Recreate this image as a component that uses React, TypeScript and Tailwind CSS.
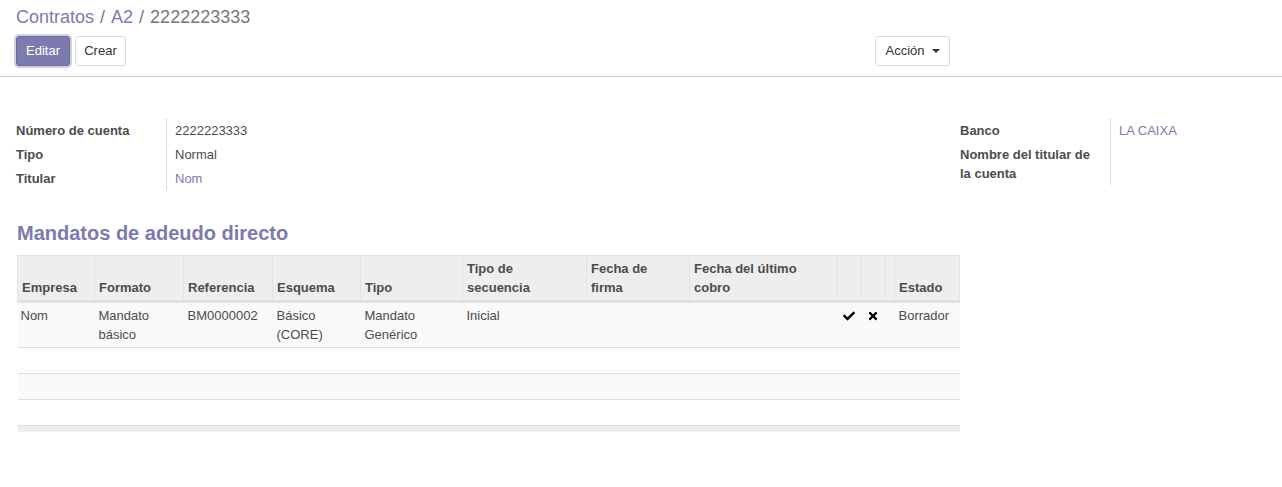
import { FaCheck, FaTimes } from "react-icons/fa";

const cols = [
	{ label: "Empresa", w: "w-[77px]" },
	{ label: "Formato", w: "w-[89px]" },
	{ label: "Referencia", w: "w-[89px]" },
	{ label: "Esquema", w: "w-[88px]" },
	{ label: "Tipo", w: "w-[102px]" },
	{ label: "Tipo de\nsecuencia", w: "w-[124px]" },
	{ label: "Fecha de\nfirma", w: "w-[103px]" },
	{ label: "Fecha del último\ncobro", w: "w-[148px]" },
	{ label: "", w: "w-[24px]" },
	{ label: "", w: "w-[24px]" },
	{ label: "", w: "w-[9px]" },
	{ label: "Estado", w: "w-[65px]" },
];

function Field({ label, value, link }: { label: string; value?: string; link?: boolean }) {
	return (
		<div className="flex">
			<div className="w-[150px] shrink-0 pr-2 py-[2.5px] font-bold leading-[19px]">{label}</div>
			<div
				className={`flex-1 border-l border-[#d9d9d9] pl-[8px] py-[2.5px] leading-[19px] ${
					link ? "text-[#7c7bad]" : ""
				}`}
			>
				{value}
			</div>
		</div>
	);
}

export default function App() {
	return (
		<div className="min-h-[487px] bg-white text-[13px] text-[#4c4c4c] font-['Liberation_Sans',Arial,sans-serif]">
			{/* control panel */}
			<div className="border-b border-[#cfcfcf] px-[16px] pt-[5px] pb-[10px]">
				<div className="text-[18px] leading-[24px]">
					<span className="text-[#7c7bad]">Contratos</span>
					<span className="text-[#777] mx-[6px]">/</span>
					<span className="text-[#7c7bad]">A2</span>
					<span className="text-[#777] mx-[6px]">/</span>
					<span className="text-[#777]">2222223333</span>
				</div>
				<div className="mt-[7px] flex items-center">
					<button className="h-[30px] w-[54px] rounded-[3px] border border-[#6d6c9c] bg-[#7c7bad] text-white shadow-[0_0_0_2px_rgba(124,123,173,0.35)]">
						Editar
					</button>
					<button className="ml-[5px] h-[30px] w-[51px] rounded-[3px] border border-[#dcdcdc] bg-white text-[#333]">
						Crear
					</button>
					<div className="ml-[749px]">
						<button className="flex h-[30px] w-[75px] items-center justify-center gap-[7px] rounded-[3px] border border-[#dcdcdc] bg-white text-[#333]">
							Acción
							<span className="h-0 w-0 border-x-[4px] border-t-[4px] border-x-transparent border-t-[#333]" />
						</button>
					</div>
				</div>
			</div>

			{/* form */}
			<div className="px-[16px] pt-[41px]">
				<div className="flex">
					<div className="w-[310px]">
						<Field label="Número de cuenta" value="2222223333" />
						<Field label="Tipo" value="Normal" />
						<Field label="Titular" value="Nom" link />
					</div>
					<div className="ml-[634px] w-[306px]">
						<Field label="Banco" value="LA CAIXA" link />
						<Field label="Nombre del titular de la cuenta" value="" />
					</div>
				</div>

				<h2 className="ml-[1px] mt-[30px] text-[20px] font-bold leading-[26px] text-[#7c7bad]">
					Mandatos de adeudo directo
				</h2>

				<table className="ml-[1px] mt-[9px] w-[942px] table-fixed border-collapse">
					<thead>
						<tr className="bg-[#eeeeee] border-t border-[#e2e2e2]">
							{cols.map((c, i) => (
								<th
									key={i}
									className={`${c.w} whitespace-pre-line border-x border-[#e2e2e2] border-b-[3px] border-b-[#dee2e6] px-[4px] pt-[3px] pb-[3px] text-left align-bottom font-bold leading-[19px]`}
								>
									{c.label}
								</th>
							))}
						</tr>
					</thead>
					<tbody>
						<tr className="bg-[#f9f9f9] border-b border-[#dddddd]">
							<td className="pl-[3px] pr-[4px] py-[3px] align-top leading-[19px]">Nom</td>
							<td className="px-[4px] py-[3px] align-top leading-[19px]">Mandato básico</td>
							<td className="px-[4px] py-[3px] align-top leading-[19px]">BM0000002</td>
							<td className="px-[4px] py-[3px] align-top leading-[19px]">Básico (CORE)</td>
							<td className="px-[4px] py-[3px] align-top leading-[19px]">Mandato Genérico</td>
							<td className="px-[4px] py-[3px] align-top leading-[19px]">Inicial</td>
							<td className="px-[4px] py-[3px]" />
							<td className="px-[4px] py-[3px]" />
							<td className="py-[3px] align-top">
								<div className="flex h-[19px] items-center justify-center pr-[2px] text-black">
									<FaCheck size={12} />
								</div>
							</td>
							<td className="py-[3px] align-top">
								<div className="flex h-[19px] items-center justify-center pr-[2px] text-black">
									<FaTimes size={12} />
								</div>
							</td>
							<td />
							<td className="px-[4px] py-[3px] align-top leading-[19px]">Borrador</td>
						</tr>
						<tr className="h-[26px] bg-white border-b border-[#dddddd]">
							<td colSpan={12} />
						</tr>
						<tr className="h-[26px] bg-[#f9f9f9] border-b border-[#dddddd]">
							<td colSpan={12} />
						</tr>
						<tr className="h-[26px] bg-white border-b border-[#dddddd]">
							<td colSpan={12} />
						</tr>
					</tbody>
					<tfoot>
						<tr className="h-[6px] bg-[#eeeeee]">
							<td colSpan={12} />
						</tr>
					</tfoot>
				</table>
			</div>
		</div>
	);
}
